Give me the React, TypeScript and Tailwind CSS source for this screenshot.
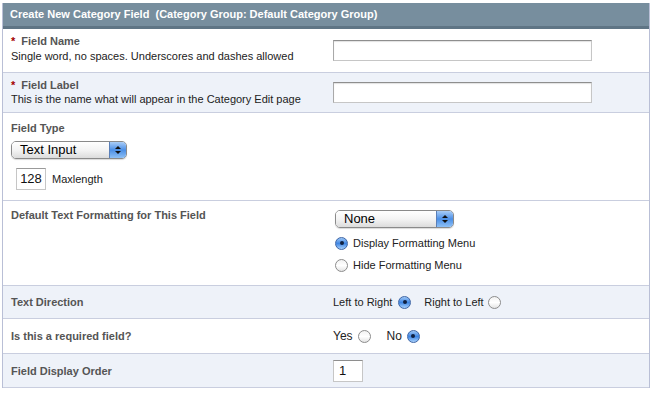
const font = { fontFamily: '"Liberation Sans", Arial, sans-serif' };

function AquaSelect({ value, width }: { value: string; width: string }) {
  return (
    <div
      className={`flex h-[18px] ${width} items-stretch overflow-hidden rounded-[5px] border border-[#8a8a8a] shadow-[0_1px_1px_rgba(0,0,0,0.15)]`}
    >
      <div className="flex flex-1 items-center bg-gradient-to-b from-white via-[#f4f4f4] to-[#dcdcdc] pl-[8px] text-[13px] text-black">
        {value}
      </div>
      <div className="flex w-[17px] flex-col items-center justify-center gap-[2px] border-l border-[#5a7fb8] bg-gradient-to-b from-[#a9cdf7] via-[#4b8fe6] to-[#8ec0f5]">
        <span className="h-0 w-0 border-x-[3px] border-b-[3px] border-x-transparent border-b-[#111]" />
        <span className="h-0 w-0 border-x-[3px] border-t-[3px] border-x-transparent border-t-[#111]" />
      </div>
    </div>
  );
}

function Radio({ checked, className = "" }: { checked?: boolean; className?: string }) {
  if (checked) {
    return (
      <span
        className={`flex size-[13px] shrink-0 items-center justify-center rounded-full border border-[#3f66a6] bg-gradient-to-b from-[#9cc6f5] via-[#3f86e3] to-[#a7d0fb] ${className}`}
      >
        <span className="size-[4px] rounded-full bg-[#102040]" />
      </span>
    );
  }
  return (
    <span
      className={`block size-[13px] shrink-0 rounded-full border border-[#8c8c8c] bg-gradient-to-b from-[#f2f2f2] via-white to-[#e4e4e4] ${className}`}
    />
  );
}

function TextBox({ className }: { className: string }) {
  return (
    <div
      className={`border border-[#c6c6c6] border-t-[#8e8e8e] border-l-[#a9a9a9] bg-white shadow-[inset_0_1px_1px_rgba(0,0,0,0.12)] ${className}`}
    />
  );
}

function Label({ children, required }: { children: string; required?: boolean }) {
  return (
    <div className="flex items-center text-[11px] leading-[14px] font-bold text-[#555]">
      {required && <span className="mr-[6px] text-[#a40000]">*</span>}
      {children}
    </div>
  );
}

export default function App() {
  return (
    <div className="h-[393px] w-[653px] bg-white pt-[3px] pl-[2px]" style={font}>
      <div className="w-[648px] border-r border-l border-[#b9bfd6]">
        <div className="flex h-[26px] items-center border-b-[3px] border-[#5f7585] bg-[#778e9e] pl-[7px] text-[11px] font-bold text-white">
          Create New Category Field&nbsp;&nbsp;(Category Group: Default Category Group)
        </div>

        <div className="grid h-[44px] grid-cols-[330px_1fr] items-center border-b border-[#c9cedf] bg-white">
          <div className="self-start pt-[5px] pl-[8px]">
            <Label required>Field Name</Label>
            <div className="mt-[1px] text-[11px] leading-[14px] text-[#222]">Single word, no spaces. Underscores and dashes allowed</div>
          </div>
          <TextBox className="h-[21px] w-[259px]" />
        </div>

        <div className="grid h-[40px] grid-cols-[330px_1fr] items-center border-b border-[#c9cedf] bg-[#eef2f9]">
          <div className="self-start pt-[5px] pl-[8px]">
            <Label required>Field Label</Label>
            <div className="text-[11px] leading-[14px] text-[#222]">This is the name what will appear in the Category Edit page</div>
          </div>
          <TextBox className="h-[21px] w-[259px]" />
        </div>

        <div className="h-[88px] border-b border-[#c9cedf] bg-white pt-[8px] pl-[8px]">
          <Label>Field Type</Label>
          <div className="mt-[6px]">
            <AquaSelect value="Text Input" width="w-[116px]" />
          </div>
          <div className="mt-[9px] ml-[5px] flex items-center gap-[6px]">
            <div className="flex h-[22px] w-[30px] items-center justify-center border border-[#c6c6c6] border-t-[#9a9a9a] bg-white text-[13px] text-[#111]">
              128
            </div>
            <span className="text-[11px] text-[#222]">Maxlength</span>
          </div>
        </div>

        <div className="grid h-[85px] grid-cols-[332px_1fr] border-b border-[#c9cedf] bg-white">
          <div className="pt-[7px] pl-[8px]">
            <Label>Default Text Formatting for This Field</Label>
          </div>
          <div className="pt-[9px]">
            <AquaSelect value="None" width="w-[119px]" />
            <div className="mt-[8px] flex items-center gap-[5px] text-[11px] leading-[14px] text-[#222]">
              <Radio checked />
              Display Formatting Menu
            </div>
            <div className="mt-[8px] flex items-center gap-[5px] text-[11px] leading-[14px] text-[#222]">
              <Radio />
              Hide Formatting Menu
            </div>
          </div>
        </div>

        <div className="grid h-[33px] grid-cols-[330px_1fr] items-center border-b border-[#c9cedf] bg-[#eef2f9]">
          <div className="pl-[8px]">
            <Label>Text Direction</Label>
          </div>
          <div className="flex items-center text-[11px] text-[#222]">
            <span>Left to Right</span>
            <Radio checked className="ml-[6px]" />
            <span className="ml-[13px]">Right to Left</span>
            <Radio className="ml-[4px]" />
          </div>
        </div>

        <div className="grid h-[35px] grid-cols-[330px_1fr] items-center border-b border-[#c9cedf] bg-white">
          <div className="pl-[8px]">
            <Label>Is this a required field?</Label>
          </div>
          <div className="flex items-center text-[12px] text-[#222]">
            <span>Yes</span>
            <Radio className="ml-[5px]" />
            <span className="ml-[16px]">No</span>
            <Radio checked className="ml-[5px]" />
          </div>
        </div>

        <div className="grid h-[34px] grid-cols-[330px_1fr] items-center border-b border-[#c9cedf] bg-[#eef2f9]">
          <div className="pl-[8px]">
            <Label>Field Display Order</Label>
          </div>
          <div className="flex h-[22px] w-[30px] items-center border border-[#c6c6c6] border-t-[#8e8e8e] bg-white pl-[5px] text-[13px] text-[#111]">
            1
          </div>
        </div>
      </div>
    </div>
  );
}
